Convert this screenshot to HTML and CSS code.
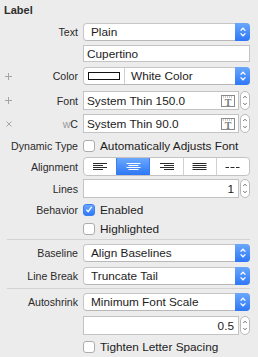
FILE: index.html
```html
<!DOCTYPE html>
<html>
<head>
<meta charset="utf-8">
<link rel="stylesheet" href="styles.css">
</head>
<body>
<div class="panel">
  <div class="title">Label</div>

  <div class="row h18 mt5">
    <div class="lbl"><span class="name">Text</span></div>
    <div class="popup"><span class="ptext">Plain</span><span class="arrows"><svg viewBox="0 0 14 18" width="14" height="18"><path d="M4.6 7.6 L7 5.2 L9.4 7.6 M4.6 10.4 L7 12.8 L9.4 10.4" stroke="#fff" stroke-width="1.3" fill="none"/></svg></span></div>
  </div>

  <div class="row h17 mt4">
    <div class="lbl"></div>
    <div class="field"><span class="ftext">Cupertino</span></div>
  </div>

  <div class="row h18 mt5">
    <div class="lbl"><span class="ico"><svg width="7" height="7" viewBox="0 0 7 7"><path d="M3.5 0 V7 M0 3.5 H7" stroke="#a5a5a5" stroke-width="1"/></svg></span><span class="name">Color</span></div>
    <div class="popup"><span class="swatchcell"><span class="swatch"></span></span><span class="ptext colortext">White Color</span><span class="arrows"><svg viewBox="0 0 14 18" width="14" height="18"><path d="M4.6 7.6 L7 5.2 L9.4 7.6 M4.6 10.4 L7 12.8 L9.4 10.4" stroke="#fff" stroke-width="1.3" fill="none"/></svg></span></div>
  </div>

  <div class="row h17 mt6">
    <div class="lbl"><span class="ico"><svg width="7" height="7" viewBox="0 0 7 7"><path d="M3.5 0 V7 M0 3.5 H7" stroke="#a5a5a5" stroke-width="1"/></svg></span><span class="name">Font</span></div>
    <div class="fieldwrap">
      <div class="field grow"><span class="ftext">System Thin 150.0</span><span class="ticon"><svg width="14" height="12" viewBox="0 0 14 12"><rect x="0.5" y="0.5" width="13" height="11" fill="#fff" stroke="#8a8a8a"/><path d="M2 2 H12" stroke="#9a9a9a" stroke-width="1" stroke-dasharray="1 1"/><text x="7" y="10.6" text-anchor="middle" font-family="Liberation Serif, serif" font-size="10" font-weight="bold" fill="#7a7a7a">T</text></svg></span></div>
      <div class="stepper"><svg width="9" height="17" viewBox="0 0 9 17"><path d="M2.6 5.6 L4.5 3.7 L6.4 5.6 M2.6 11.4 L4.5 13.3 L6.4 11.4" stroke="#555" stroke-width="1" fill="none"/></svg></div>
    </div>
  </div>

  <div class="row h17 mt6">
    <div class="lbl"><span class="ico x"><svg width="6" height="6" viewBox="0 0 6 6"><path d="M0.5 0.5 L5.5 5.5 M5.5 0.5 L0.5 5.5" stroke="#a5a5a5" stroke-width="1"/></svg></span><span class="name"><span class="wlight">w</span>C</span></div>
    <div class="fieldwrap">
      <div class="field grow"><span class="ftext">System Thin 90.0</span><span class="ticon"><svg width="14" height="12" viewBox="0 0 14 12"><rect x="0.5" y="0.5" width="13" height="11" fill="#fff" stroke="#8a8a8a"/><path d="M2 2 H12" stroke="#9a9a9a" stroke-width="1" stroke-dasharray="1 1"/><text x="7" y="10.6" text-anchor="middle" font-family="Liberation Serif, serif" font-size="10" font-weight="bold" fill="#7a7a7a">T</text></svg></span></div>
      <div class="stepper"><svg width="9" height="17" viewBox="0 0 9 17"><path d="M2.6 5.6 L4.5 3.7 L6.4 5.6 M2.6 11.4 L4.5 13.3 L6.4 11.4" stroke="#555" stroke-width="1" fill="none"/></svg></div>
    </div>
  </div>

  <div class="row h14 mt8">
    <div class="lbl"><span class="name">Dynamic Type</span></div>
    <div class="check"><span class="box"></span><span class="ctext">Automatically Adjusts Font</span></div>
  </div>

  <div class="row h19 mt4">
    <div class="lbl"><span class="name">Alignment</span></div>
    <div class="seg">
      <span class="segitem"><svg width="15" height="8" viewBox="0 0 15 8"><path d="M0 0.5 H14 M0 2.5 H10 M0 4.5 H14 M0 6.5 H10" stroke="#2a2a2a" stroke-width="1"/></svg></span>
      <span class="segitem sel"><svg width="15" height="8" viewBox="0 0 15 8"><path d="M0.5 0.5 H14.5 M2.5 2.5 H12.5 M0.5 4.5 H14.5 M2.5 6.5 H12.5" stroke="#fff" stroke-width="1"/></svg></span>
      <span class="segitem"><svg width="15" height="8" viewBox="0 0 15 8"><path d="M1 0.5 H15 M5 2.5 H15 M1 4.5 H15 M5 6.5 H15" stroke="#2a2a2a" stroke-width="1"/></svg></span>
      <span class="segitem"><svg width="15" height="8" viewBox="0 0 15 8"><path d="M0.5 0.5 H14.5 M0.5 2.5 H14.5 M0.5 4.5 H14.5 M0.5 6.5 H14.5" stroke="#2a2a2a" stroke-width="1"/></svg></span>
      <span class="segitem"><svg width="15" height="8" viewBox="0 0 15 8"><path d="M0.5 4.5 H4 M5.5 4.5 H9.5 M11 4.5 H14.5" stroke="#2a2a2a" stroke-width="1"/></svg></span>
    </div>
  </div>

  <div class="row h18 mt3">
    <div class="lbl"><span class="name">Lines</span></div>
    <div class="fieldwrap">
      <div class="field grow right"><span class="ftext">1</span></div>
      <div class="stepper"><svg width="9" height="17" viewBox="0 0 9 17"><path d="M2.6 5.6 L4.5 3.7 L6.4 5.6 M2.6 11.4 L4.5 13.3 L6.4 11.4" stroke="#555" stroke-width="1" fill="none"/></svg></div>
    </div>
  </div>

  <div class="row h15 mt5">
    <div class="lbl"><span class="name">Behavior</span></div>
    <div class="check"><span class="box on"><svg width="11" height="11" viewBox="0 0 11 11"><path d="M2.6 5.6 L4.6 7.8 L8.4 2.6" stroke="#fff" stroke-width="1.5" fill="none"/></svg></span><span class="ctext">Enabled</span></div>
  </div>

  <div class="row h15 mt4">
    <div class="lbl"></div>
    <div class="check"><span class="box"></span><span class="ctext">Highlighted</span></div>
  </div>

  <div class="sep mt3"></div>

  <div class="row h18 mt4">
    <div class="lbl"><span class="name">Baseline</span></div>
    <div class="popup"><span class="ptext">Align Baselines</span><span class="arrows"><svg viewBox="0 0 14 18" width="14" height="18"><path d="M4.6 7.6 L7 5.2 L9.4 7.6 M4.6 10.4 L7 12.8 L9.4 10.4" stroke="#fff" stroke-width="1.3" fill="none"/></svg></span></div>
  </div>

  <div class="row h18 mt5">
    <div class="lbl"><span class="name">Line Break</span></div>
    <div class="popup"><span class="ptext">Truncate Tail</span><span class="arrows"><svg viewBox="0 0 14 18" width="14" height="18"><path d="M4.6 7.6 L7 5.2 L9.4 7.6 M4.6 10.4 L7 12.8 L9.4 10.4" stroke="#fff" stroke-width="1.3" fill="none"/></svg></span></div>
  </div>

  <div class="sep mt3"></div>

  <div class="row h18 mt4">
    <div class="lbl"><span class="name">Autoshrink</span></div>
    <div class="popup"><span class="ptext">Minimum Font Scale</span><span class="arrows"><svg viewBox="0 0 14 18" width="14" height="18"><path d="M4.6 7.6 L7 5.2 L9.4 7.6 M4.6 10.4 L7 12.8 L9.4 10.4" stroke="#fff" stroke-width="1.3" fill="none"/></svg></span></div>
  </div>

  <div class="row h17 mt5">
    <div class="lbl"></div>
    <div class="fieldwrap">
      <div class="field grow right"><span class="ftext">0.5</span></div>
      <div class="stepper"><svg width="9" height="17" viewBox="0 0 9 17"><path d="M2.6 5.6 L4.5 3.7 L6.4 5.6 M2.6 11.4 L4.5 13.3 L6.4 11.4" stroke="#555" stroke-width="1" fill="none"/></svg></div>
    </div>
  </div>

  <div class="row h14 mt7">
    <div class="lbl"></div>
    <div class="check"><span class="box"></span><span class="ctext">Tighten Letter Spacing</span></div>
  </div>
</div>
</body>
</html>
```

FILE: styles.css
```css
html, body {
  margin: 0;
  padding: 0;
  background: #ececec;
}
body {
  width: 258px;
  height: 357px;
  overflow: hidden;
  font-family: "Liberation Sans", Arial, sans-serif;
  color: #1c1c1c;
}
.panel {
  display: flex;
  flex-direction: column;
}
.title {
  height: 18px;
  box-sizing: border-box;
  padding: 4px 0 0 4px;
  font-size: 11px;
  line-height: 13px;
  font-weight: bold;
  color: #2e2e2e;
}
.row {
  display: grid;
  grid-template-columns: 78px 167px;
  column-gap: 5px;
  align-items: stretch;
}
.h14 { height: 14px; }
.h15 { height: 15px; }
.h17 { height: 17px; }
.h18 { height: 18px; }
.h19 { height: 19px; }
.mt3 { margin-top: 3px; }
.mt4 { margin-top: 4px; }
.mt5 { margin-top: 5px; }
.mt6 { margin-top: 6px; }
.mt7 { margin-top: 7px; }
.mt8 { margin-top: 8px; }

.lbl {
  display: flex;
  align-items: center;
  font-size: 10.6px;
  color: #2a2a2a;
  white-space: nowrap;
}
.lbl .name { margin-left: auto; }
.ico {
  display: flex;
  margin-left: 5px;
}
.ico.x { margin-left: 6px; }
.wlight { color: #9a9a9a; }

.popup {
  display: flex;
  align-items: center;
  box-sizing: border-box;
  background: #fff;
  border: 1px solid #c6c6c6;
  border-bottom-color: #b8b8b8;
  border-radius: 4px;
  font-size: 11.8px;
  white-space: nowrap;
}
.ptext { padding-left: 7px; }
.colortext { padding-left: 6px; }
.arrows {
  display: flex;
  align-self: stretch;
  margin: -1px -1px -1px auto;
  width: 15px;
  border-radius: 0 4px 4px 0;
  background: linear-gradient(#6aa8fc, #2e77f7);
  align-items: center;
  justify-content: center;
}
.swatchcell {
  display: flex;
  align-items: center;
  align-self: stretch;
  padding: 0 4px 0 4px;
  border-right: 1px solid #d0d0d0;
}
.swatch {
  width: 30px;
  height: 6px;
  border: 1px solid #111;
  background: #fff;
}

.field {
  display: flex;
  align-items: center;
  box-sizing: border-box;
  background: #fff;
  border: 1px solid #c3c3c3;
  font-size: 11.8px;
  white-space: nowrap;
}
.field .ftext { padding-left: 3px; }
.field.right { justify-content: flex-end; }
.field.right .ftext { padding: 0 4px 0 0; }
.fieldwrap {
  display: flex;
  gap: 1px;
}
.grow { flex: 1; }
.ticon {
  display: flex;
  margin-left: auto;
  margin-right: 3px;
}
.stepper {
  box-sizing: border-box;
  width: 10px;
  display: flex;
  align-items: center;
  justify-content: center;
  background: #fff;
  border: 1px solid #b9b9b9;
  border-radius: 5px;
}

.check {
  display: flex;
  align-items: center;
  font-size: 11.8px;
  white-space: nowrap;
}
.box {
  box-sizing: border-box;
  width: 12px;
  height: 12px;
  border: 1px solid #adadad;
  border-radius: 3px;
  background: #fff;
  display: flex;
  align-items: center;
  justify-content: center;
}
.box.on {
  border-color: #3d7ff2;
  background: linear-gradient(#6aa8fc, #2e77f7);
}
.ctext { margin-left: 5px; }

.seg {
  display: flex;
  box-sizing: border-box;
  border: 1px solid #c3c3c3;
  border-radius: 4px;
  background: #fff;
  overflow: hidden;
}
.segitem {
  flex: 1;
  display: flex;
  align-items: center;
  justify-content: center;
  border-left: 1px solid #d2d2d2;
}
.segitem:first-child { border-left: none; }
.segitem.sel {
  background: linear-gradient(#6aa8fc, #2e77f7);
  border-left-color: #3a7cf3;
}
.segitem.sel + .segitem { border-left-color: #3a7cf3; }

.sep {
  height: 1px;
  margin-left: 7px;
  width: 243px;
  background: #d3d3d3;
}
```
